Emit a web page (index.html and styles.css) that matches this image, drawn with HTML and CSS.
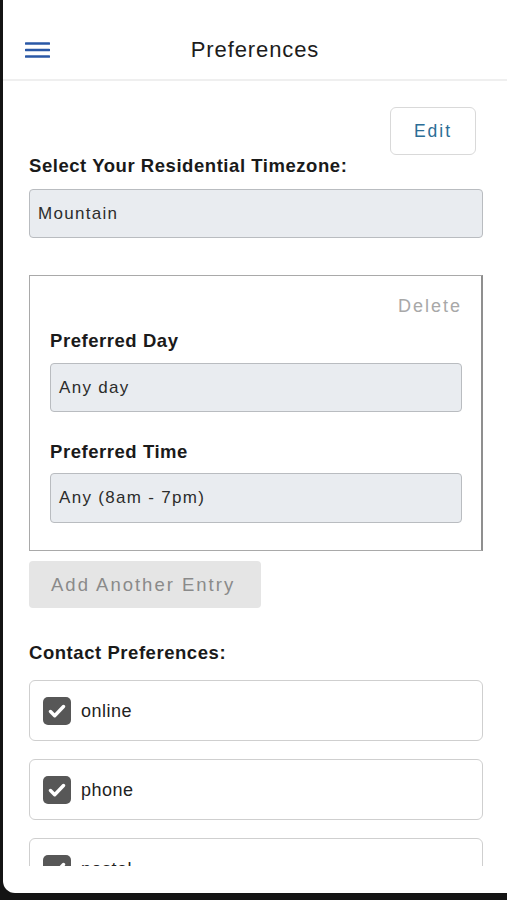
FILE: index.html
```html
<!DOCTYPE html>
<html lang="en">
<head>
  <meta charset="UTF-8">
  <meta name="viewport" content="width=device-width, initial-scale=1.0">
  <title>Preferences</title>
  <link rel="stylesheet" href="styles.css">
</head>
<body>

  <div class="tela">
    <header class="cabecalho">
      <button class="botao-menu" aria-label="Menu">
        <svg width="25" height="18" viewBox="0 0 25 18">
          <path d="M1 2.5h23M1 9h23M1 15.5h23" stroke="#2a58a6" stroke-width="2.6" stroke-linecap="round" fill="none"/>
        </svg>
      </button>
      <h1 class="titulo">Preferences</h1>
    </header>

    <main class="conteudo">
      <div class="linha-editar">
        <button class="botao-editar">Edit</button>
      </div>

      <label class="rotulo">Select Your Residential Timezone:</label>
      <div class="campo">Mountain</div>

      <!-- Entrada de horário -->
      <div class="caixa-entrada">
        <div class="linha-apagar">
          <span class="apagar">Delete</span>
        </div>
        <label class="rotulo rotulo-dia">Preferred Day</label>
        <div class="campo campo-dia">Any day</div>
        <label class="rotulo rotulo-hora">Preferred Time</label>
        <div class="campo campo-hora">Any (8am - 7pm)</div>
      </div>

      <button class="botao-adicionar">Add Another Entry</button>

      <label class="rotulo rotulo-contato">Contact Preferences:</label>
      <div class="lista-contato">
        <div class="opcao">
          <span class="marcador">
            <svg width="18" height="14" viewBox="0 0 18 14"><path d="M2.5 7.5l4.2 4.2L15.5 2.5" stroke="#fff" stroke-width="3.4" fill="none" stroke-linecap="round" stroke-linejoin="round"/></svg>
          </span>
          <span class="texto-opcao">online</span>
        </div>
        <div class="opcao">
          <span class="marcador">
            <svg width="18" height="14" viewBox="0 0 18 14"><path d="M2.5 7.5l4.2 4.2L15.5 2.5" stroke="#fff" stroke-width="3.4" fill="none" stroke-linecap="round" stroke-linejoin="round"/></svg>
          </span>
          <span class="texto-opcao">phone</span>
        </div>
        <div class="opcao">
          <span class="marcador">
            <svg width="18" height="14" viewBox="0 0 18 14"><path d="M2.5 7.5l4.2 4.2L15.5 2.5" stroke="#fff" stroke-width="3.4" fill="none" stroke-linecap="round" stroke-linejoin="round"/></svg>
          </span>
          <span class="texto-opcao">postal</span>
        </div>
      </div>
    </main>
  </div>

</body>
</html>
```

FILE: styles.css
```css
/* Reset básico */
* {
  margin: 0;
  padding: 0;
  box-sizing: border-box;
}

body {
  font-family: "Liberation Sans", Arial, sans-serif;
  background-color: #141414;
  color: #1a1a1a;
  height: 900px;
  overflow: hidden;
}

.tela {
  margin-left: 3px;
  height: 893px;
  background-color: #fff;
  border-bottom-left-radius: 12px;
  overflow: hidden;
}

/* Cabeçalho */
.cabecalho {
  position: relative;
  height: 81px;
  display: flex;
  align-items: center;
  justify-content: center;
  padding-top: 21px;
  border-bottom: 2px solid #efefef;
}

.botao-menu {
  position: absolute;
  left: 22px;
  top: 41px;
  background: none;
  border: none;
  display: flex;
}

.titulo {
  font-size: 22px;
  font-weight: normal;
  letter-spacing: 0.9px;
  color: #1c1c1c;
}

/* Conteúdo rolável */
.conteudo {
  height: 785px;
  overflow: hidden;
  padding: 26px 24px 0 26px;
}

.linha-editar {
  display: flex;
  justify-content: flex-end;
  padding-right: 7px;
}

.botao-editar {
  width: 86px;
  height: 48px;
  background: #fff;
  border: 1px solid #d9d9d9;
  border-radius: 6px;
  font-family: inherit;
  font-size: 17.5px;
  letter-spacing: 2px;
  color: #2b6d96;
}

.rotulo {
  display: block;
  font-size: 18.5px;
  font-weight: bold;
  line-height: 22px;
  letter-spacing: 0.55px;
}

.campo {
  margin-top: 12px;
  height: 49px;
  display: flex;
  align-items: center;
  padding-left: 8px;
  background-color: #e9ecf0;
  border: 1px solid #b9bcc0;
  border-radius: 4px;
  font-size: 17px;
  letter-spacing: 1.3px;
  color: #2c2c2c;
}

/* Caixa de entrada */
.caixa-entrada {
  margin-top: 37px;
  height: 276px;
  border: 1px solid #a9a9a9;
  border-right: 2px solid #8f8f8f;
  padding: 19px 19px 0 20px;
}

.linha-apagar {
  display: flex;
  justify-content: flex-end;
  line-height: 22px;
}

.apagar {
  font-size: 18px;
  letter-spacing: 2px;
  color: #a8a8a8;
}

.rotulo-dia {
  margin-top: 13px;
}

.campo-dia {
  margin-top: 11px;
}

.rotulo-hora {
  margin-top: 29px;
}

.campo-hora {
  margin-top: 10px;
  height: 50px;
}

.botao-adicionar {
  margin-top: 10px;
  width: 232px;
  height: 47px;
  background-color: #e5e5e5;
  border: none;
  border-radius: 4px;
  font-family: inherit;
  font-size: 18.5px;
  letter-spacing: 2px;
  color: #8a8a8a;
  text-align: left;
  padding-left: 22px;
}

.rotulo-contato {
  margin-top: 34px;
}

/* Lista de opções */
.lista-contato {
  margin-top: 16px;
  display: flex;
  flex-direction: column;
  gap: 18px;
}

.opcao {
  height: 61px;
  display: flex;
  align-items: center;
  gap: 10px;
  padding: 1px 0 0 13px;
  border: 1px solid #cfcfcf;
  border-radius: 6px;
  flex-shrink: 0;
}

.marcador {
  width: 28px;
  height: 28px;
  background-color: #575757;
  border-radius: 5px;
  display: flex;
  align-items: center;
  justify-content: center;
}

.texto-opcao {
  font-size: 18px;
  letter-spacing: 0.5px;
  color: #222;
}
```
